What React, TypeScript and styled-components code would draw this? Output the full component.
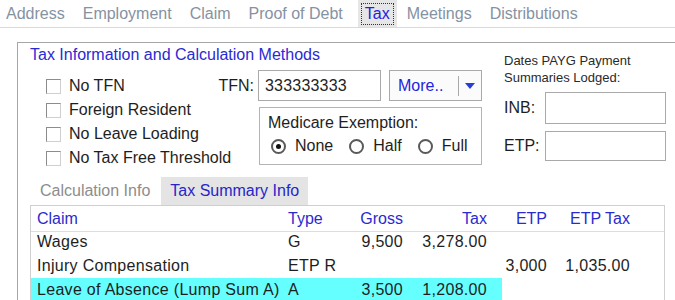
import React from 'react';
import styled, { createGlobalStyle } from 'styled-components';

const GlobalStyle = createGlobalStyle`
  html, body {
    margin: 0;
    padding: 0;
    background: #ffffff;
    overflow: hidden;
  }
  body {
    font-family: "Liberation Sans", Arial, sans-serif;
    font-size: 16px;
    color: #1e1e1e;
  }
`;

const Page = styled.div`
  width: 675px;
  height: 300px;
  overflow: hidden;
  background: #fff;
`;

const TabBar = styled.div`
  display: flex;
  align-items: stretch;
  height: 27px;
  padding-left: 3px;
  border-bottom: 1px solid #dadada;
`;

const TopTab = styled.div<{ $active?: boolean }>`
  display: flex;
  align-items: center;
  padding: 0 3px;
  margin-right: ${p => (p.$active ? '7px' : '12px')};
  color: ${p => (p.$active ? '#2222dd' : '#8592a2')};
  background: ${p => (p.$active ? '#e6e6e6' : 'transparent')};
  white-space: nowrap;
`;

const FocusLabel = styled.span`
  border: 1px dotted #333;
  padding: 2px 3px;
  line-height: 16px;
`;

const Body = styled.div`
  padding: 14px 0 0 17px;
`;

const Panel = styled.div`
  width: 720px;
  height: 300px;
  border: 1px solid #a6a6a6;
  padding: 0 0 0 12px;
  box-sizing: border-box;
`;

const TopSection = styled.div`
  display: flex;
  gap: 20px;
`;

const LeftBlock = styled.div`
  width: 454px;
  display: flex;
  flex-direction: column;
`;

const Title = styled.div`
  color: #2a2ad4;
  height: 20px;
  line-height: 20px;
  margin-top: 2px;
`;

const FormRow = styled.div`
  display: flex;
  margin-top: 5px;
`;

const CheckColumn = styled.div`
  display: flex;
  flex-direction: column;
  padding: 4px 0 0 16px;
  width: 170px;
`;

const CheckRow = styled.label`
  display: flex;
  align-items: center;
  gap: 8px;
  height: 24px;
  white-space: nowrap;
`;

const CheckBox = styled.span`
  width: 15px;
  height: 15px;
  box-sizing: border-box;
  border: 1px solid #8c8c8c;
  border-right-color: #cfcfcf;
  border-bottom-color: #cfcfcf;
  background: #fff;
  flex-shrink: 0;
`;

const FieldColumn = styled.div`
  display: flex;
  flex-direction: column;
  gap: 6px;
`;

const TfnRow = styled.div`
  display: flex;
  align-items: center;
`;

const TfnLabel = styled.span`
  width: 42px;
  padding-right: 4px;
  text-align: right;
  box-sizing: border-box;
`;

const TextBox = styled.div<{ $w: number; $h: number }>`
  width: ${p => p.$w}px;
  height: ${p => p.$h}px;
  box-sizing: border-box;
  border: 1px solid #a9a9a9;
  background: #fff;
  display: flex;
  align-items: center;
  padding-left: 6px;
  letter-spacing: 0.2px;
`;

const MoreButton = styled.div`
  margin-left: 8px;
  width: 93px;
  height: 31px;
  box-sizing: border-box;
  border: 1px solid #a9a9a9;
  display: flex;
  align-items: center;
  background: #fbfbfb;
`;

const MoreText = styled.span`
  color: #2424dd;
  padding-left: 8px;
  width: 68px;
  box-sizing: border-box;
`;

const MoreArrow = styled.span`
  flex: 1;
  height: 20px;
  border-left: 1px solid #a9a9a9;
  display: flex;
  align-items: center;
  justify-content: center;
`;

const MedicareBox = styled.div`
  margin-left: 43px;
  width: 223px;
  height: 58px;
  box-sizing: border-box;
  border: 1px solid #b4b4b4;
  padding: 6px 0 0 8px;
`;

const MedicareTitle = styled.div`
  line-height: 18px;
`;

const RadioRow = styled.div`
  display: flex;
  align-items: center;
  margin-top: 5px;
  padding-left: 3px;
`;

const RadioItem = styled.span`
  display: flex;
  align-items: center;
  gap: 9px;
  margin-right: 16px;
`;

const Radio = styled.span<{ $checked?: boolean }>`
  width: 15px;
  height: 15px;
  box-sizing: border-box;
  border: 2px solid #5a5a5a;
  border-radius: 50%;
  display: flex;
  align-items: center;
  justify-content: center;
  &::after {
    content: '';
    display: ${p => (p.$checked ? 'block' : 'none')};
    width: 5px;
    height: 5px;
    border-radius: 50%;
    background: #111;
  }
`;

const RightBlock = styled.div`
  display: flex;
  flex-direction: column;
  padding-top: 9px;
`;

const SmallNote = styled.div`
  font-size: 13px;
  line-height: 17px;
  color: #2a2a2a;
`;

const DateRow = styled.div<{ $top: number }>`
  display: flex;
  align-items: center;
  margin-top: ${p => p.$top}px;
`;

const DateLabel = styled.span`
  width: 41px;
`;

const SubTabs = styled.div`
  display: flex;
  align-items: stretch;
  height: 28px;
  margin-top: 7px;
  padding-left: 1px;
`;

const SubTab = styled.div<{ $active?: boolean }>`
  display: flex;
  align-items: center;
  padding: 0 9px;
  margin-right: 2px;
  color: ${p => (p.$active ? '#2626c8' : '#8d8d8d')};
  background: ${p => (p.$active ? '#e4e4e4' : 'transparent')};
  white-space: nowrap;
`;

const Table = styled.div`
  width: 635px;
  height: 120px;
  border: 1px solid #cfcfcf;
  box-sizing: border-box;
  display: grid;
  grid-template-columns: 251px 63px 64px 93px 51px 83px 1fr;
  grid-auto-rows: 24px;
  align-content: start;
`;

const HeadCell = styled.div<{ $right?: boolean; $pad?: number }>`
  color: #2a2ad0;
  height: 25px;
  display: flex;
  align-items: center;
  justify-content: ${p => (p.$right ? 'flex-end' : 'flex-start')};
  padding: ${p => (p.$right ? `0 ${p.$pad ?? 6}px 0 0` : '0 0 0 6px')};
  border-bottom: 1px solid #dddddd;
  margin-bottom: 1px;
`;

const Cell = styled.div<{ $right?: boolean; $pad?: number; $hl?: boolean }>`
  display: flex;
  align-items: center;
  justify-content: ${p => (p.$right ? 'flex-end' : 'flex-start')};
  padding: ${p => (p.$right ? `0 ${p.$pad ?? 6}px 0 0` : '0 0 0 6px')};
  background: ${p => (p.$hl ? '#66ffff' : 'transparent')};
  white-space: nowrap;
  letter-spacing: 0.3px;
`;

const HeadRow = styled.div`
  display: contents;
  & > div {
    grid-row: 1;
  }
`;

interface Row {
  claim: string;
  type: string;
  gross: string;
  tax: string;
  etp: string;
  etpTax: string;
  highlight?: boolean;
}

const rows: Row[] = [
  { claim: 'Wages', type: 'G', gross: '9,500', tax: '3,278.00', etp: '', etpTax: '' },
  { claim: 'Injury Compensation', type: 'ETP R', gross: '', tax: '', etp: '3,000', etpTax: '1,035.00' },
  { claim: 'Leave of Absence (Lump Sum A)', type: 'A', gross: '3,500', tax: '1,208.00', etp: '', etpTax: '', highlight: true },
];

const tabs = ['Address', 'Employment', 'Claim', 'Proof of Debt', 'Tax', 'Meetings', 'Distributions'];

const DropArrow = () => (
  <svg width="10" height="6" viewBox="0 0 10 6">
    <path d="M0 0 L10 0 L5 6 Z" fill="#2a3fd0" />
  </svg>
);

const App: React.FC = () => {
  return (
    <Page>
      <GlobalStyle />
      <TabBar>
        {tabs.map(t =>
          t === 'Tax' ? (
            <TopTab key={t} $active>
              <FocusLabel>{t}</FocusLabel>
            </TopTab>
          ) : (
            <TopTab key={t}>{t}</TopTab>
          )
        )}
      </TabBar>
      <Body>
        <Panel>
          <TopSection>
            <LeftBlock>
              <Title>Tax Information and Calculation Methods</Title>
              <FormRow>
                <CheckColumn>
                  <CheckRow><CheckBox />No TFN</CheckRow>
                  <CheckRow><CheckBox />Foreign Resident</CheckRow>
                  <CheckRow><CheckBox />No Leave Loading</CheckRow>
                  <CheckRow><CheckBox />No Tax Free Threshold</CheckRow>
                </CheckColumn>
                <FieldColumn>
                  <TfnRow>
                    <TfnLabel>TFN:</TfnLabel>
                    <TextBox $w={123} $h={31}>333333333</TextBox>
                    <MoreButton>
                      <MoreText>More..</MoreText>
                      <MoreArrow><DropArrow /></MoreArrow>
                    </MoreButton>
                  </TfnRow>
                  <MedicareBox>
                    <MedicareTitle>Medicare Exemption:</MedicareTitle>
                    <RadioRow>
                      <RadioItem><Radio $checked />None</RadioItem>
                      <RadioItem><Radio />Half</RadioItem>
                      <RadioItem><Radio />Full</RadioItem>
                    </RadioRow>
                  </MedicareBox>
                </FieldColumn>
              </FormRow>
            </LeftBlock>
            <RightBlock>
              <SmallNote>Dates PAYG Payment</SmallNote>
              <SmallNote>Summaries Lodged:</SmallNote>
              <DateRow $top={6}>
                <DateLabel>INB:</DateLabel>
                <TextBox $w={121} $h={32} />
              </DateRow>
              <DateRow $top={7}>
                <DateLabel>ETP:</DateLabel>
                <TextBox $w={121} $h={30} />
              </DateRow>
            </RightBlock>
          </TopSection>
          <SubTabs>
            <SubTab>Calculation Info</SubTab>
            <SubTab $active>Tax Summary Info</SubTab>
          </SubTabs>
          <Table>
            <HeadRow>
              <HeadCell>Claim</HeadCell>
              <HeadCell>Type</HeadCell>
              <HeadCell $right>Gross</HeadCell>
              <HeadCell $right $pad={15}>Tax</HeadCell>
              <HeadCell $right>ETP</HeadCell>
              <HeadCell $right>ETP Tax</HeadCell>
              <HeadCell />
            </HeadRow>
            {rows.map(r => (
              <React.Fragment key={r.claim}>
                <Cell $hl={r.highlight}>{r.claim}</Cell>
                <Cell $hl={r.highlight}>{r.type}</Cell>
                <Cell $right $hl={r.highlight}>{r.gross}</Cell>
                <Cell $right $pad={15} $hl={r.highlight}>{r.tax}</Cell>
                <Cell $right>{r.etp}</Cell>
                <Cell $right>{r.etpTax}</Cell>
                <Cell />
              </React.Fragment>
            ))}
          </Table>
        </Panel>
      </Body>
    </Page>
  );
};

export default App;
